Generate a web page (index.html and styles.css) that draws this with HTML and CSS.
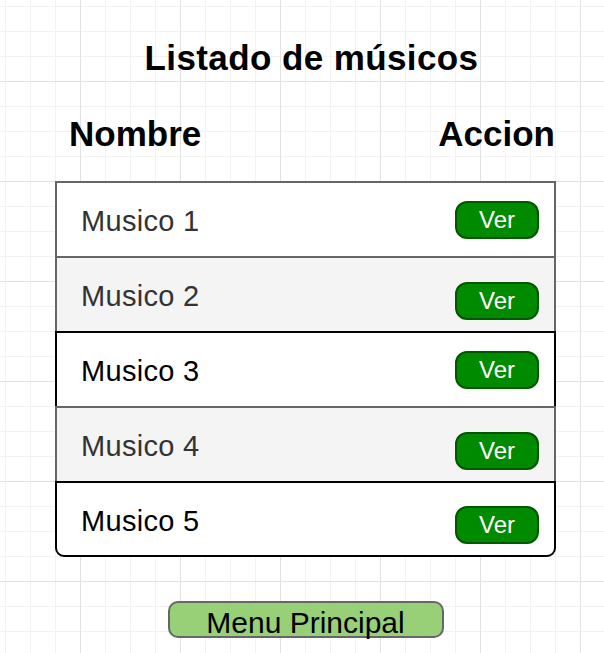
FILE: index.html
```html
<!DOCTYPE html>
<html lang="es">
<head>
<meta charset="utf-8">
<title>Listado de músicos</title>
<link rel="stylesheet" href="styles.css">
</head>
<body>
<div class="page">
  <h1 class="title">Listado de músicos</h1>
  <div class="head">
    <span>Nombre</span>
    <span>Accion</span>
  </div>
  <div class="table">
    <div class="row row-grey row-white"><span class="name">Musico 1</span><button class="ver">Ver</button></div>
    <div class="row row-grey row-shade"><span class="name">Musico 2</span><button class="ver ver-low">Ver</button></div>
    <div class="row row-black row-white"><span class="name">Musico 3</span><button class="ver">Ver</button></div>
    <div class="row row-grey row-shade"><span class="name">Musico 4</span><button class="ver ver-low">Ver</button></div>
    <div class="row row-black row-white row-last"><span class="name">Musico 5</span><button class="ver ver-low">Ver</button></div>
  </div>
  <div class="menu-wrap">
    <button class="menu">Menu Principal</button>
  </div>
</div>
</body>
</html>
```
FILE: styles.css
```css
html, body {
  margin: 0;
  padding: 0;
}
body {
  width: 604px;
  height: 653px;
  overflow: hidden;
  font-family: "Liberation Sans", Arial, sans-serif;
  background-color: #ffffff;
  background-image:
    linear-gradient(to right, #e2e2e2 1px, transparent 1px),
    linear-gradient(to bottom, #e2e2e2 1px, transparent 1px),
    linear-gradient(to right, #f2f2f2 1px, transparent 1px),
    linear-gradient(to bottom, #f2f2f2 1px, transparent 1px);
  background-size: 100px 100px, 100px 100px, 25px 25px, 25px 25px;
  background-position: 80px 0, 0 81px, 5px 0, 0 6px;
}
.page {
  display: flex;
  flex-direction: column;
  width: 501px;
  padding-left: 55px;
}
.title {
  margin: 0;
  padding-top: 38px;
  padding-left: 12px;
  height: 40px;
  line-height: 40px;
  font-size: 35px;
  font-weight: bold;
  letter-spacing: 0.4px;
  text-align: center;
  color: #000;
}
.head {
  display: flex;
  justify-content: space-between;
  margin-top: 36px;
  height: 40px;
  line-height: 40px;
  padding: 0 1px 0 14px;
  font-size: 35px;
  font-weight: bold;
  color: #000;
}
.table {
  display: flex;
  flex-direction: column;
  margin-top: 27px;
}
.row {
  box-sizing: border-box;
  height: 75px;
  display: flex;
  align-items: center;
  justify-content: space-between;
  padding: 0 15px 0 24px;
  border-top: 2px solid;
  border-left: 2px solid;
  border-right: 2px solid;
}
.row-grey {
  border-color: #666666;
  color: #333333;
}
.row-black {
  border-color: #000000;
  color: #000000;
}
.row-white {
  background: #ffffff;
}
.row-shade {
  background: #f4f4f4;
}
.row-last {
  height: 76px;
  border-bottom: 2px solid #000;
  border-radius: 0 0 9px 9px;
}
.name {
  font-size: 29px;
  letter-spacing: 0.3px;
  padding-top: 4px;
}
.ver {
  box-sizing: border-box;
  width: 84px;
  height: 38px;
  margin: 0;
  padding: 0;
  border: 2px solid #005700;
  border-radius: 12px;
  background: #008a00;
  color: #ffffff;
  font-family: "Liberation Sans", Arial, sans-serif;
  font-size: 24px;
  line-height: 34px;
  text-align: center;
}
.ver-low {
  margin-top: 12px;
}
.menu-wrap {
  display: flex;
  justify-content: center;
  margin-top: 44px;
}
.menu {
  box-sizing: border-box;
  width: 276px;
  height: 37px;
  margin: 0;
  padding: 5px 0 0 0;
  border: 2px solid #666666;
  border-radius: 10px;
  background: #97d077;
  color: #000000;
  font-family: "Liberation Sans", Arial, sans-serif;
  font-size: 30px;
  line-height: 30px;
  text-align: center;
}
```
